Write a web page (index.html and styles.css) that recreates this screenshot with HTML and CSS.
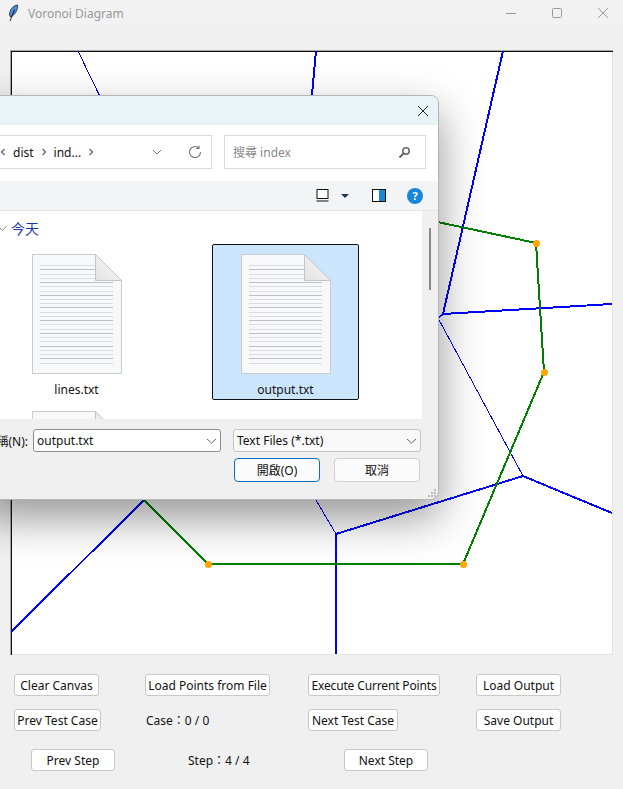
FILE: index.html
```html
<!DOCTYPE html>
<html lang="en">
<head>
    <meta charset="UTF-8">
    <title>Voronoi Diagram</title>
    <link rel="stylesheet" href="styles.css">
</head>
<body>
<!-- shared file icon -->
<svg class="defs" width="0" height="0">
    <defs>
        <linearGradient id="foldfill" x1="0" y1="1" x2="1" y2="0">
            <stop offset="0" stop-color="#e2e2e2"/>
            <stop offset="1" stop-color="#fbfbfb"/>
        </linearGradient>
    </defs>
    <symbol id="txtfile" viewBox="0 0 90 120">
        <path class="sheet" d="M.5 .5H63.500L89.500 26.500V119.500H.5Z"/>
        <path class="rule-soft" d="M8 11.500H63M8 20.500H63M8 24.500H81M8 32.500H81M8 37.500H81M8 45.500H81M8 49.500H81M8 58.500H81M8 62.500H81M8 70.500H81M8 75.500H81M8 83.500H81M8 87.500H81M8 96.500H81M8 100.500H81M8 109.500H81"/>
        <path class="rule-hard" d="M8 15.500H63M8 28.500H81M8 41.500H81M8 53.500H81M8 66.500H81M8 79.500H81M8 92.500H81M8 104.500H81"/>
        <path class="fold" d="M63.500 .5V26.500H89.500Z"/>
    </symbol>
</svg>

<div class="window">
    <div class="titlebar">
        <svg class="feather" width="12" height="18" viewBox="0 0 12 18">
            <path d="M10.500 1C6 1.500 2.500 6 2.500 11L3.500 13C8 11 11 6 10.500 1Z" fill="#4a93dc" stroke="#222" stroke-width=".8"/>
            <path d="M7.500 5.500L3 17" stroke="#111" stroke-width=".9" fill="none"/>
        </svg>
        <span class="title">Voronoi Diagram</span>
        <div class="controls">
            <svg width="12" height="12" viewBox="0 0 12 12"><path d="M1 6.500H11" stroke="#9a9a9a" fill="none"/></svg>
            <svg width="12" height="12" viewBox="0 0 12 12"><rect x="1.500" y="1.500" width="9" height="9" rx="1" stroke="#9a9a9a" fill="none"/></svg>
            <svg width="12" height="12" viewBox="0 0 12 12"><path d="M1 1L11 11M11 1L1 11" stroke="#9a9a9a" fill="none"/></svg>
        </div>
    </div>

    <div class="canvas-wrap">
        <svg class="canvas" width="603" height="605" viewBox="10 50 603 605">
            <path class="edge-light" d="M612.500 51V654.500H11"/>
            <path class="edge-grey" d="M10.500 655V50.500H613"/>
            <path class="edge-black" d="M11.500 655V51.500H613"/>
            <!-- edges -->
            <g class="thin">
                <line x1="78" y1="51" x2="145" y2="190"/>
                <line x1="438" y1="318" x2="523" y2="476"/>
                <line x1="290" y1="456" x2="336" y2="534"/>
            </g>
            <g class="thick">
                <line x1="316" y1="51" x2="293" y2="300"/>
                <polyline points="503,51 443,314 612,304"/>
                <polyline points="443,314 438,318"/>
                <polyline points="612,513 523,476 336,534 336,654"/>
                <line x1="144" y1="500" x2="11" y2="632"/>
            </g>
            <!-- hull -->
            <polyline class="hull" points="400,214 536,243 544,372 463,564 208,564 144,500 100,456"/>
            <circle class="site" cx="536.500" cy="243.500" r="3.500"/>
            <circle class="site" cx="544.500" cy="372.500" r="3.500"/>
            <circle class="site" cx="463.500" cy="564.500" r="3.500"/>
            <circle class="site" cx="208.500" cy="564.500" r="3.500"/>
        </svg>
    </div>

    <div class="panel">
        <div class="row">
            <button class="btn w-clear">Clear Canvas</button>
            <button class="btn w-load">Load Points from File</button>
            <button class="btn w-exec">Execute Current Points</button>
            <button class="btn w-out">Load Output</button>
        </div>
        <div class="row">
            <button class="btn w-prev">Prev Test Case</button>
            <span class="info w-case">Case：0 / 0</span>
            <button class="btn w-next">Next Test Case</button>
            <button class="btn w-out">Save Output</button>
        </div>
        <div class="row row-step">
            <button class="btn w-step">Prev Step</button>
            <span class="info w-stepinfo">Step：4 / 4</span>
            <button class="btn w-step">Next Step</button>
        </div>
    </div>
</div>

<div class="dialog">
    <div class="dlg-title">
        <svg width="12" height="12" viewBox="0 0 12 12"><path d="M1 1L11 11M11 1L1 11" stroke="#222" fill="none"/></svg>
    </div>
    <div class="dlg-nav">
        <div class="crumbs">
            <svg width="6" height="8" viewBox="0 0 6 8"><path d="M4.500 1L1.500 4L4.500 7" stroke="#666" stroke-width="1.300" fill="none"/></svg>
            <span>dist</span>
            <svg width="6" height="8" viewBox="0 0 6 8"><path d="M1.500 1L4.500 4L1.500 7" stroke="#666" stroke-width="1.300" fill="none"/></svg>
            <span>ind...</span>
            <svg width="6" height="8" viewBox="0 0 6 8"><path d="M1.500 1L4.500 4L1.500 7" stroke="#666" stroke-width="1.300" fill="none"/></svg>
            <svg class="crumb-down" width="10" height="6" viewBox="0 0 10 6"><path d="M1 1L5 5L9 1" stroke="#777" fill="none"/></svg>
            <svg class="refresh" width="14" height="14" viewBox="0 0 14 14"><path d="M12.500 7A5.500 5.500 0 1 1 10.500 2.800M11 0.500V3.500H8" stroke="#777" stroke-width="1.100" fill="none"/></svg>
        </div>
        <div class="search">
            <span>搜尋 index</span>
            <svg width="13" height="13" viewBox="0 0 13 13"><circle cx="8" cy="5" r="3.200" stroke="#666" stroke-width="1.500" fill="none"/><path d="M5.500 7.500L1.500 11.500" stroke="#666" stroke-width="2" fill="none"/></svg>
        </div>
    </div>
    <div class="dlg-tools">
        <svg width="13" height="13" viewBox="0 0 13 13"><rect x="1" y="0.500" width="11" height="9" fill="#fff" stroke="#111"/><path d="M0.500 12H12.500" stroke="#111"/></svg>
        <svg class="tool-caret" width="8" height="4" viewBox="0 0 8 4"><path d="M0 0H8L4 4Z" fill="#1f3553"/></svg>
        <svg class="tool-pane" width="14" height="13" viewBox="0 0 14 13"><rect x="0.500" y="0.500" width="13" height="12" fill="#fff" stroke="#111"/><rect x="7" y="1" width="6" height="11" fill="#1b86d8"/></svg>
        <span class="help">?</span>
    </div>
    <div class="dlg-body">
        <div class="dlg-files">
            <div class="group">
                <svg width="8" height="6" viewBox="0 0 8 6"><path d="M0 3L2.500 5.500L7 0.500" stroke="#888" fill="none"/></svg>
                <span>今天</span>
            </div>
            <div class="file file-a">
                <svg class="doc" width="90" height="120"><use href="#txtfile"/></svg>
                <span>lines.txt</span>
            </div>
            <div class="file file-b">
                <svg class="doc" width="90" height="120"><use href="#txtfile"/></svg>
                <span>output.txt</span>
            </div>
            <svg class="doc doc-c" width="90" height="120"><use href="#txtfile"/></svg>
        </div>
        <div class="scrollbar"><div class="thumb"></div></div>
    </div>
    <div class="dlg-foot">
        <div class="foot-row">
            <span class="name-label">檔案名稱(N):</span>
            <div class="combo combo-name"><span>output.txt</span><svg width="11" height="6" viewBox="0 0 11 6"><path d="M1 1L5.500 5L10 1" stroke="#666" fill="none"/></svg></div>
            <div class="combo combo-type"><span>Text Files (*.txt)</span><svg width="11" height="6" viewBox="0 0 11 6"><path d="M1 1L5.500 5L10 1" stroke="#666" fill="none"/></svg></div>
        </div>
        <div class="foot-row foot-btns">
            <button class="dbtn dbtn-ok">開啟(O)</button>
            <button class="dbtn">取消</button>
        </div>
        <svg class="grip" width="10" height="10" viewBox="0 0 10 10"><path d="M7 1h2v2H7zM4 4h2v2H4zM7 4h2v2H7zM1 7h2v2H1zM4 7h2v2H4zM7 7h2v2H7z" fill="#bbb"/></svg>
    </div>
</div>
</body>
</html>
```

FILE: styles.css
```css
* {
    box-sizing: border-box;
    margin: 0;
    padding: 0;
}

html, body {
    width: 623px;
    height: 789px;
    overflow: hidden;
    background: #f0f0f0;
}

body {
    position: relative;
    font-family: "Noto Sans", "Noto Sans CJK TC", sans-serif;
    font-size: 12px;
    color: #111;
}

.defs {
    position: absolute;
}

/* main window */
.titlebar {
    height: 26px;
    display: flex;
    align-items: center;
    padding-left: 7px;
    color: #999;
    background: #f2f2f2;
}

.feather {
    margin-right: 9px;
}

.controls {
    margin-left: auto;
    display: flex;
    gap: 34px;
    padding-right: 14px;
}

.canvas-wrap {
    padding: 24px 0 0 10px;
}

.canvas {
    display: block;
    background: #fff;
}

.canvas line, .canvas polyline, .canvas path {
    shape-rendering: crispEdges;
    fill: none;
}

.edge-light { stroke: #e4e4e4; }
.edge-grey { stroke: #a8a8a8; }
.edge-black { stroke: #111; }

.thin line {
    stroke: #0000ff;
    stroke-width: 1;
}

.thick line, .thick polyline {
    stroke: #0000ff;
    stroke-width: 2;
}

.hull {
    stroke: #008000;
    stroke-width: 2;
}

.site {
    fill: #ffa500;
}

/* buttons under the canvas */
.panel {
    padding: 19px 0 0 14px;
}

.row {
    display: flex;
    align-items: center;
    height: 22px;
    margin-bottom: 13px;
}

.row-step {
    margin-top: 18px;
    padding-left: 17px;
}

.btn {
    height: 22px;
    font: inherit;
    color: #111;
    background: #fff;
    border: 1px solid #c8c8c8;
    border-radius: 3px;
    white-space: nowrap;
}

.info {
    white-space: nowrap;
}

.w-clear { width: 85px; margin-right: 46px; }
.w-load { width: 125px; margin-right: 38px; }
.w-exec { width: 132px; margin-right: 36px; letter-spacing: -.15px; }
.w-out { width: 85px; }
.w-prev { width: 87px; margin-right: 44px; }
.w-case { width: 125px; margin-right: 38px; padding-left: 1px; }
.w-next { width: 90px; margin-right: 78px; }
.w-step { width: 84px; }
.w-stepinfo { width: 229px; padding-left: 73px; }

/* file dialog, lying over the canvas */
.dialog {
    position: absolute;
    left: -20px;
    top: 95px;
    width: 459px;
    height: 405px;
    display: flex;
    flex-direction: column;
    background: #f0f0f0;
    border: 1px solid #b5b5b5;
    border-radius: 8px;
    box-shadow: 0 18px 44px rgba(0, 0, 0, .42);
}

.dlg-title {
    height: 29px;
    flex: none;
    display: flex;
    align-items: center;
    justify-content: flex-end;
    padding-right: 9px;
    background: #e9f4f7;
    border-radius: 7px 7px 0 0;
}

.dlg-nav {
    height: 56px;
    flex: none;
    display: flex;
    align-items: center;
    gap: 12px;
    padding: 0 12px 2px 0;
    background: #fff;
}

.crumbs {
    flex: 1;
    height: 34px;
    display: flex;
    align-items: center;
    gap: 7px;
    padding-left: 18px;
    border: 1px solid #d9d9d9;
}

.crumb-down {
    margin-left: 51px;
}

.refresh {
    margin-left: 19px;
}

.search {
    width: 202px;
    height: 34px;
    flex: none;
    display: flex;
    align-items: center;
    justify-content: space-between;
    padding: 0 14px 0 8px;
    color: #888;
    border: 1px solid #d9d9d9;
}

.dlg-tools {
    height: 30px;
    flex: none;
    display: flex;
    align-items: center;
    justify-content: flex-end;
    padding-right: 15px;
    background: #f3f4f6;
    border-bottom: 1px solid #e4e4e4;
}

.tool-caret { margin-left: 12px; }
.tool-pane { margin-left: 23px; }

.help {
    width: 16px;
    height: 16px;
    margin-left: 21px;
    border-radius: 50%;
    background: #1a86d8;
    color: #fff;
    font-size: 11px;
    font-weight: bold;
    line-height: 16px;
    text-align: center;
}

.dlg-body {
    height: 208px;
    flex: none;
    display: flex;
}

.dlg-files {
    position: relative;
    flex: 1;
    background: #fff;
    overflow: hidden;
}

.group {
    position: absolute;
    left: 19px;
    top: 7px;
    display: flex;
    align-items: center;
    gap: 3px;
    color: #1f3aa8;
    font-size: 14px;
}

.file {
    position: absolute;
    top: 33px;
    width: 147px;
    height: 156px;
    display: flex;
    flex-direction: column;
    align-items: center;
    padding-top: 10px;
}

.file span {
    margin-top: 7px;
}

.file-a { left: 22px; }

.file-b {
    left: 231px;
    background: #cbe6fc;
    border: 1px solid #111;
    border-radius: 2px;
    padding-top: 9px;
}

.doc-c {
    position: absolute;
    left: 51px;
    top: 200px;
}

.sheet {
    fill: #f7f8f9;
    stroke: #cbcbcb;
}

.rule-soft, .rule-hard {
    fill: none;
    shape-rendering: crispEdges;
}

.rule-soft { stroke: #dcdcdc; }
.rule-hard { stroke: #c0c0c0; }

.fold {
    fill: url(#foldfill);
    stroke: #c4c4c4;
}

.scrollbar {
    position: relative;
    width: 16px;
    flex: none;
}

.thumb {
    position: absolute;
    left: 7px;
    top: 17px;
    width: 2px;
    height: 62px;
    background: #8a8a8a;
}

.dlg-foot {
    position: relative;
    flex: 1;
    padding: 10px 17px 0 0;
}

.foot-row {
    display: flex;
    align-items: center;
}

.name-label {
    width: 52px;
    flex: none;
    display: flex;
    justify-content: flex-end;
    padding-right: 5px;
    white-space: nowrap;
}

.combo {
    height: 23px;
    display: flex;
    align-items: center;
    justify-content: space-between;
    padding: 0 3px 0 3px;
    background: #fff;
    border: 1px solid #c4c4c4;
    border-radius: 3px;
}

.combo-name {
    width: 188px;
    margin-right: 12px;
    border-color: #8e8e8e;
}

.combo-type {
    width: 188px;
    background: #f8f8f8;
}

.foot-btns {
    justify-content: flex-end;
    gap: 14px;
    margin-top: 6px;
    padding-right: 1px;
}

.dbtn {
    width: 86px;
    height: 24px;
    font: inherit;
    color: #111;
    background: #fbfbfb;
    border: 1px solid #cfcfcf;
    border-radius: 4px;
}

.dbtn-ok {
    border-color: #0a6fc2;
}

.grip {
    position: absolute;
    right: 1px;
    bottom: 1px;
}
```
